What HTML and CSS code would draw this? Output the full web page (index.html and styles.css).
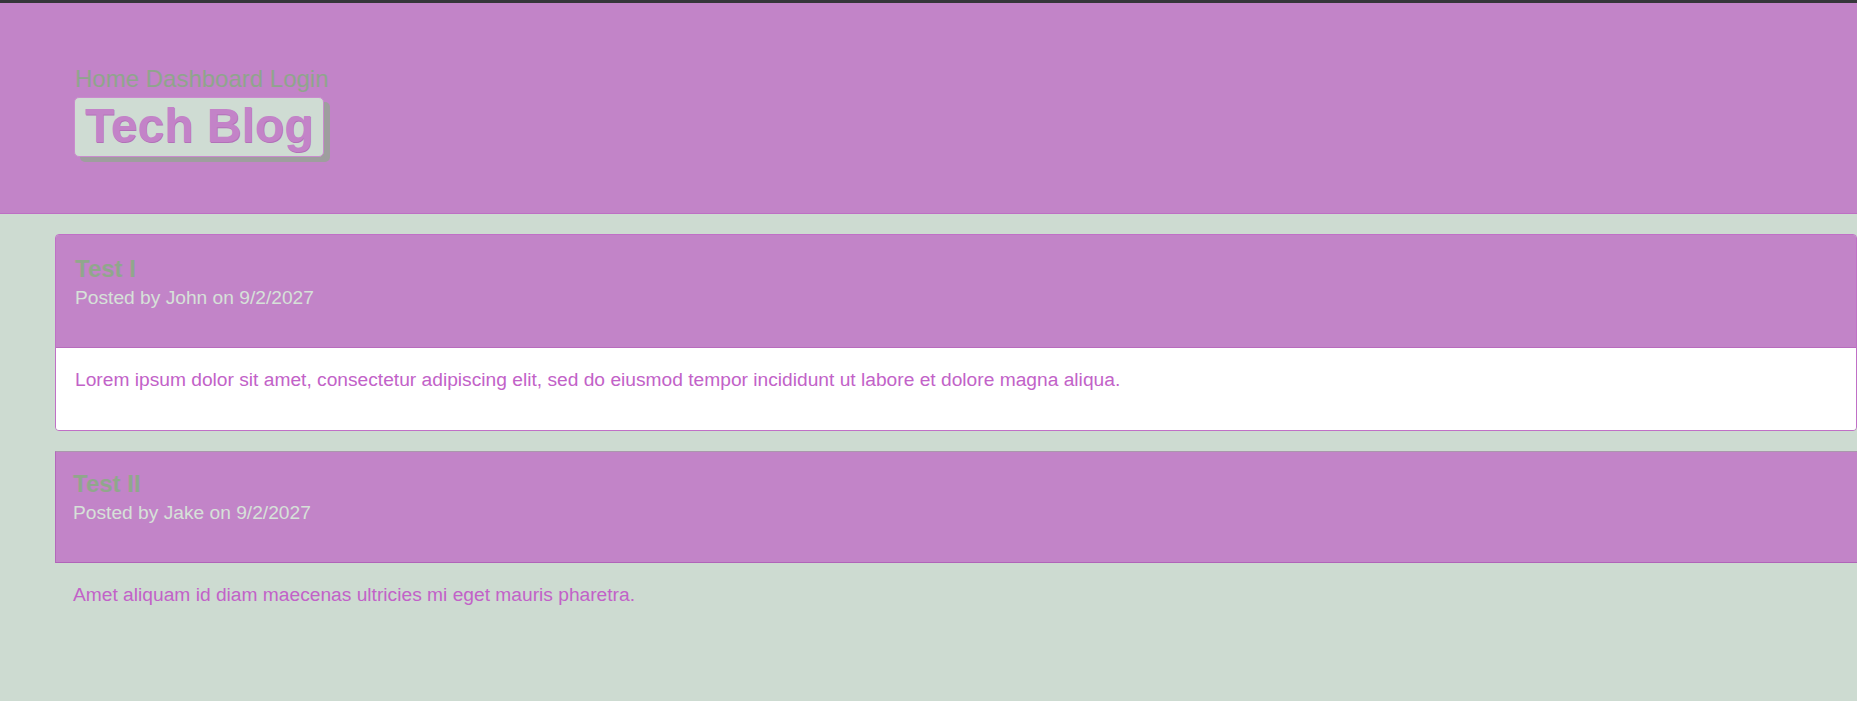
FILE: index.html
```html
<!DOCTYPE html>
<html lang="en">
<head>
<meta charset="utf-8">
<title>Tech Blog</title>
<link rel="stylesheet" href="styles.css">
</head>
<body>
<div class="topbar"></div>
<header class="site-header">
  <nav class="nav">
    <a href="#">Home</a>
    <a href="#">Dashboard</a>
    <a href="#">Login</a>
  </nav>
  <h1 class="brand">Tech Blog</h1>
</header>
<main class="posts">
  <article class="post post-active">
    <div class="post-head">
      <h2 class="post-title">Test I</h2>
      <p class="post-meta">Posted by John on 9/2/2027</p>
    </div>
    <div class="post-body">
      <p>Lorem ipsum dolor sit amet, consectetur adipiscing elit, sed do eiusmod tempor incididunt ut labore et dolore magna aliqua.</p>
    </div>
  </article>
  <article class="post post-plain">
    <div class="post-head">
      <h2 class="post-title">Test II</h2>
      <p class="post-meta">Posted by Jake on 9/2/2027</p>
    </div>
    <div class="post-body">
      <p>Amet aliquam id diam maecenas ultricies mi eget mauris pharetra.</p>
    </div>
  </article>
</main>
</body>
</html>
```
FILE: styles.css
```css
* { box-sizing: border-box; }

html, body {
  margin: 0;
  padding: 0;
}

body {
  background: #cddbd1;
  font-family: "Liberation Sans", Arial, sans-serif;
  overflow: hidden;
}

.topbar {
  height: 3px;
  background: #35363a;
}

.site-header {
  height: 211px;
  background: #c284c8;
  border-bottom: 1px solid #bd6fc4;
  padding: 62px 0 0 75px;
}

.nav {
  display: flex;
  gap: 6.7px;
  font-size: 24px;
  line-height: 27.6px;
}

.nav a {
  color: #8fa58c;
  text-decoration: none;
}

.brand {
  display: inline-block;
  margin: 4px 0 0 -1px;
  padding: 0 10px 3px 10px;
  background: #cfdcd3;
  border: 1px solid #c98ccd;
  border-radius: 5px;
  box-shadow: 6px 5px 0 #9e9e9e;
  color: #c383c8;
  font-size: 48px;
  font-weight: bold;
  line-height: 55px;
  text-shadow: 0.6px 0.6px 0 #b271b8;
}

.posts {
  padding: 20px 0 0 55px;
  display: flex;
  flex-direction: column;
  gap: 20px;
}

.post {
  width: 1802px;
}

.post-head {
  background: #c284c8;
}

.post-title {
  margin: 0;
  font-size: 24px;
  line-height: 27.6px;
  font-weight: bold;
  color: #90a78c;
}

.post-meta {
  margin: 4px 0 0;
  font-size: 19.2px;
  line-height: 22px;
  color: #d6e1d8;
}

.post-body p {
  margin: 0;
  font-size: 19.2px;
  line-height: 22px;
  color: #c262c8;
}

/* first card: bordered, white body */
.post-active {
  border: 1px solid #c070c6;
  border-radius: 4px;
  overflow: hidden;
}

.post-active .post-head {
  height: 113px;
  padding: 20px 19px 0;
  border-bottom: 1px solid #b86cbd;
}

.post-active .post-body {
  background: #ffffff;
  height: 82px;
  padding: 21px 19px 0;
}

/* second card: flat header, body on page background */
.post-plain .post-head {
  height: 112px;
  padding: 18px 17px 0 17px;
  border-top: 1px solid #aa98ac;
  border-left: 1px solid #b468bb;
  border-bottom: 1px solid #b064b8;
}

.post-plain .post-body {
  padding: 21px 18px 0;
}
```
